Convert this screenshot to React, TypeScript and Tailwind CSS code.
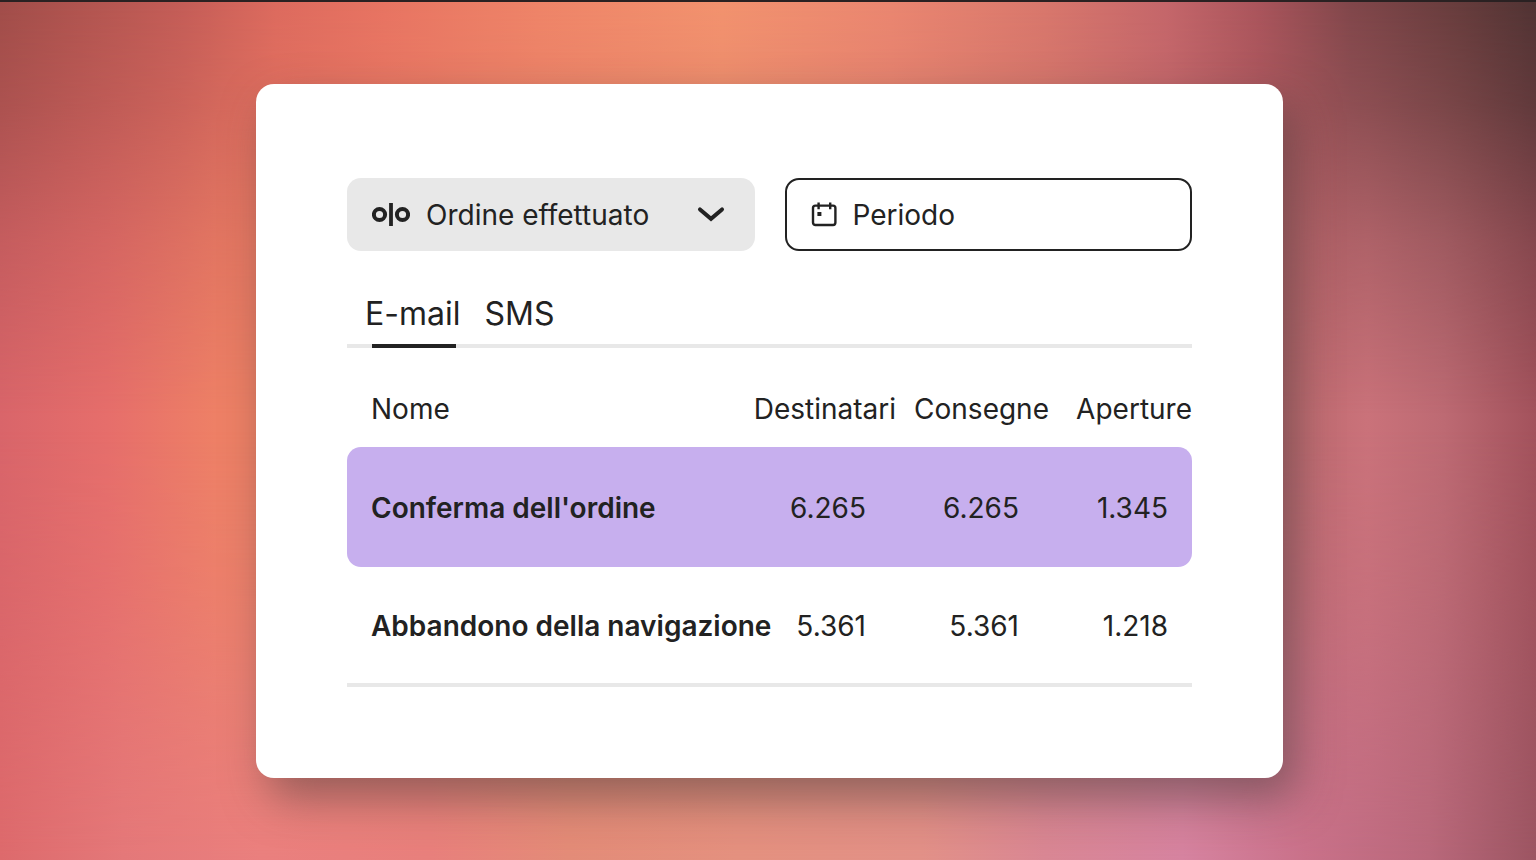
import React, { useState } from "react";

interface Flow {
  id: string;
  name: string;
  recipients: string;
  deliveries: string;
  opens: string;
}

const flows: Flow[] = [
  { id: "order", name: "Conferma dell'ordine", recipients: "6.265", deliveries: "6.265", opens: "1.345" },
  { id: "browse", name: "Abbandono della navigazione", recipients: "5.361", deliveries: "5.361", opens: "1.218" },
];

const tabs = ["E-mail", "SMS"];

const MetricIcon = () => (
  <svg width="38" height="26" viewBox="0 0 38 26" fill="none" stroke="currentColor" aria-hidden="true">
    <circle cx="7.5" cy="12.5" r="5.6" strokeWidth="4" />
    <path d="M19 1v23" strokeWidth="3.8" />
    <circle cx="30.5" cy="12.5" r="5.6" strokeWidth="4" />
  </svg>
);

const ChevronIcon = () => (
  <svg width="28" height="18" viewBox="0 0 28 18" fill="none" stroke="currentColor" aria-hidden="true">
    <path d="M3 3.4L14 12.8L25 3.4" strokeWidth="4" strokeLinecap="round" />
  </svg>
);

const CalendarIcon = () => (
  <svg width="26" height="26" viewBox="0 0 26 26" fill="none" stroke="currentColor" aria-hidden="true">
    <rect x="2" y="3.6" width="22.4" height="19.4" rx="2.4" strokeWidth="2.4" />
    <path d="M7.6 0.4v6.8M19.2 0.4v6.8" strokeWidth="2.4" />
    <rect x="6.4" y="10" width="4" height="4" fill="currentColor" stroke="none" />
  </svg>
);

// Soft colour field: one band for the middle, one fading in from each edge
const Backdrop = () => (
  <div className="absolute inset-0 -z-10 bg-[linear-gradient(90deg,#d9656a_0%,#e66e6b_7%,#ee8066_14%,#ee8064_18%,#b8666a_82%,#ca727a_89%,#bd6a73_94%,#a3525c_100%)]">
    <div className="absolute inset-0 bg-[linear-gradient(90deg,#a04d49_0%,#c45d57_12%,#dc6a5e_18%,#e77462_25%,#ee8468_35%,#f2926e_47%,#ea8670_58%,#d8776c_68%,#c4666a_76%,#a9545b_82%,#80464a_88%,#663c3c_95%,#503333_100%)] [mask-image:linear-gradient(180deg,#000_0%,rgba(0,0,0,0.8)_12%,rgba(0,0,0,0.35)_28%,transparent_48%)]" />
    <div className="absolute inset-0 bg-[linear-gradient(90deg,#dd6a6c_0%,#e47879_8%,#ea7f7e_17%,#e8807c_28%,#e38c78_37%,#e4917f_48%,#e29188_60%,#d98794_68%,#d683a0_77%,#c9718a_85%,#b9687b_93%,#9c5562_100%)] [mask-image:linear-gradient(0deg,#000_0%,rgba(0,0,0,0.7)_14%,rgba(0,0,0,0.25)_32%,transparent_50%)]" />
  </div>
);

const App: React.FC = () => {
  const [tab, setTab] = useState("E-mail");
  const [period, setPeriod] = useState("");

  return (
    <div className="relative isolate min-h-screen border-t-2 border-[#2a2122] pt-[82px] pr-[253px] pb-20 pl-64 font-[Inter,sans-serif] text-[#222222]">
      <Backdrop />
      <main className="rounded-[18px] bg-white px-[91px] pt-[94px] pb-[91px] shadow-[12px_20px_44px_rgba(70,60,60,0.5)]">
        {/* Filters */}
        <div className="grid grid-cols-2 gap-[30px]">
          <div className="relative flex h-[73px] items-center gap-4 rounded-[14px] bg-[#e8e8e8] pl-[25px]">
            <MetricIcon />
            <select
              aria-label="Metrica"
              className="h-full min-w-0 flex-1 appearance-none bg-transparent text-[28px] outline-none"
            >
              <option>Ordine effettuato</option>
            </select>
            <span className="pointer-events-none absolute right-[30px]">
              <ChevronIcon />
            </span>
          </div>
          <label className="flex h-[73px] items-center gap-4 rounded-[14px] border-2 border-[#222222] pl-6">
            <CalendarIcon />
            <input
              type="text"
              aria-label="Periodo"
              placeholder="Periodo"
              className="h-full min-w-0 flex-1 bg-transparent text-[28px] outline-none placeholder:text-[#222222]"
              value={period}
              onChange={(e) => setPeriod(e.target.value)}
            />
          </label>
        </div>

        {/* Tabs */}
        <div role="tablist" className="mt-9 flex gap-6 border-b-4 border-[#e8e8e8] pl-[18px]">
          {tabs.map((name) => (
            <button
              key={name}
              type="button"
              role="tab"
              aria-selected={tab === name}
              onClick={() => setTab(name)}
              className="relative h-[57px] pb-1 text-[32px]"
            >
              {name}
              {tab === name && <span className="absolute right-1 -bottom-1 left-[7px] h-1 bg-[#222222]" />}
            </button>
          ))}
        </div>

        {/* Results */}
        <div className="mt-6 border-b-4 border-[#e8e8e8]">
          <table className="w-full table-fixed text-right text-[28px] whitespace-nowrap">
            <thead>
              <tr className="h-[75px]">
                <th className="pb-0.5 pl-6 text-left font-normal">Nome</th>
                <th className="w-[150px] pb-0.5 font-normal">Destinatari</th>
                <th className="w-[153px] pb-0.5 font-normal">Consegne</th>
                <th className="w-[143px] pb-0.5 font-normal">Aperture</th>
              </tr>
            </thead>
            <tbody>
              {flows.map((flow) => (
                <tr key={flow.id} className="h-[120px] first:bg-[#c7afee] last:h-[116px]">
                  <th scope="row" className="rounded-l-[14px] pt-0.5 pl-6 text-left font-semibold">{flow.name}</th>
                  <td className="pt-0.5 pr-[30px]">{flow.recipients}</td>
                  <td className="pt-0.5 pr-[30px]">{flow.deliveries}</td>
                  <td className="rounded-r-[14px] pt-0.5 pr-6">{flow.opens}</td>
                </tr>
              ))}
            </tbody>
          </table>
        </div>
      </main>
    </div>
  );
};

export default App;
